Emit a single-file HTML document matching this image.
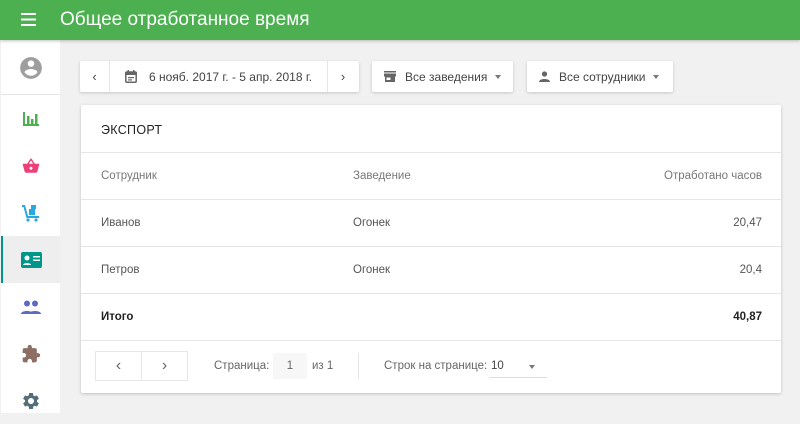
<!DOCTYPE html>
<html><head><meta charset="utf-8"><style>
*{box-sizing:border-box;margin:0;padding:0}
body{width:800px;height:413px;overflow:hidden;background:#f1f1f1;font-family:"Liberation Sans","Noto Sans CJK SC",sans-serif;position:relative;color:#333}
.hdr{position:absolute;left:0;top:0;width:800px;height:40px;background:#4caf50;box-shadow:0 1px 3px rgba(0,0,0,.25);z-index:2}
.hdr .t{position:absolute;left:60px;top:9px;color:#fff;font-size:19px}
.side{position:absolute;left:1px;top:40px;width:59px;height:373px;background:#fff}
.it{position:absolute;left:0;width:59px;height:47px;display:flex;align-items:center;justify-content:center}
.btn{position:absolute;top:61px;height:31px;background:#fff;box-shadow:0 1px 3px rgba(0,0,0,.18);border-radius:2px;font-size:12px;color:#444;display:flex;align-items:center;white-space:nowrap}
.card{position:absolute;left:81px;top:105px;width:700px;height:288px;background:#fff;box-shadow:0 1px 3px rgba(0,0,0,.2);border-radius:2px}
.row{position:absolute;left:0;width:700px;height:47px;border-top:1px solid #e6e6e6;font-size:11.5px;color:#555}
.row span{position:absolute;top:17px}
.c1{left:20px}.c2{left:272px}.c3{right:19px}
</style></head><body>
<div class="hdr">
<svg style="position:absolute;left:21px;top:13px" width="15" height="13"><rect y="0" width="15" height="2" fill="#fff"/><rect y="5.5" width="15" height="2" fill="#fff"/><rect y="11" width="15" height="2" fill="#fff"/></svg>
<div class="t">Общее отработанное время</div></div>
<div class="side">
<div class="it" style="top:4px"><svg width="26" height="26" viewBox="0 0 24 24"><path fill="#9e9e9e" d="M12 2C6.48 2 2 6.48 2 12s4.48 10 10 10 10-4.48 10-10S17.52 2 12 2zm0 3c1.66 0 3 1.34 3 3s-1.34 3-3 3-3-1.34-3-3 1.34-3 3-3zm0 14.2c-2.5 0-4.71-1.28-6-3.220.03-1.99 4-3.08 6-3.08 1.99 0 5.970 1.09 6 3.08-1.29 1.94-3.5 3.22-6 3.22z"/></svg></div>
<div style="position:absolute;left:0;top:54px;width:59px;height:1px;background:#e6e6e6"></div>
<div class="it" style="top:55px"><svg width="18" height="18" viewBox="0 0 18 18" fill="#4caf50"><rect x="1" y="2" width="2" height="14"/><rect x="1" y="14" width="16" height="2"/><rect x="5" y="6" width="2.5" height="9"/><rect x="9" y="9" width="2.5" height="6"/><rect x="13" y="4" width="2.5" height="11"/></svg></div>
<div class="it" style="top:102px"><svg width="20" height="18" viewBox="0 0 24 24"><path fill="#ec407a" d="M17.21 9l-4.38-6.56a1 1 0 0 0-1.66 0L6.79 9H2c-.55 0-1 .45-1 1l.04.27 2.54 9.27c.23.84 1 1.46 1.920 1.46h13c.92 0 1.69-.62 1.93-1.46l2.54-9.27L23 10c0-.55-.45-1-1-1h-4.79zM9 9l3-4.4L15 9H9zm3 8c-1.1 0-2-.9-2-2s.9-2 2-2 2 .9 2 2-.9 2-2 2z"/></svg></div>
<div class="it" style="top:149px"><svg width="20" height="20" viewBox="0 0 20 20" fill="#29a8e0"><path d="M1 2h3l3 11h11v2H5.5L2.5 4H1z"/><rect x="8" y="6" width="6" height="6"/><rect x="10" y="2" width="5" height="4"/><circle cx="7" cy="17" r="1.6"/><circle cx="15" cy="17" r="1.6"/></svg></div>
<div class="it" style="top:196px;background:#eeeeee;border-left:2px solid #009688"><svg width="21" height="16" viewBox="0 0 21 16"><rect width="21" height="16" rx="2" fill="#009688"/><circle cx="6" cy="6" r="2.5" fill="#fff"/><path d="M2 13c0-2.5 8-2.5 8 0z" fill="#fff"/><rect x="12" y="4" width="7" height="1.5" fill="#fff"/><rect x="12" y="7.5" width="7" height="1.5" fill="#fff"/></svg></div>
<div class="it" style="top:243px"><svg width="20" height="14" viewBox="0 0 20 14" fill="#5c6bc0"><circle cx="6" cy="3.5" r="3"/><circle cx="14" cy="3.5" r="3"/><path d="M0 14c0-4 12-4 12 0z"/><path d="M8 14c0-4 12-4 12 0z"/></svg></div>
<div class="it" style="top:290px"><svg width="20" height="20" viewBox="0 0 24 24"><path fill="#8d6e63" d="M20.5 11H19V7c0-1.1-.9-2-2-2h-4V3.5a2.5 2.5 0 0 0-5 0V5H4c-1.1 0-2 .9-2 2v3.8h1.5c1.49 0 2.7 1.21 2.7 2.7s-1.21 2.7-2.7 2.7H2V20c0 1.1.9 2 2 2h3.8v-1.5c0-1.49 1.21-2.7 2.7-2.7 1.49 0 2.7 1.21 2.7 2.7V22H17c1.1 0 2-.9 2-2v-4h1.5a2.5 2.5 0 0 0 0-5z"/></svg></div>
<div class="it" style="top:337px"><svg width="20" height="20" viewBox="0 0 24 24"><path fill="#546e7a" d="M19.14 12.94c.04-.3.06-.61.06-.94 0-.32-.02-.64-.07-.94l2.030-1.58a.49.49 0 0 0 .12-.61l-1.92-3.32a.49.49 0 0 0-.59-.22l-2.39.96c-.5-.38-1.03-.7-1.62-.94l-.36-2.54a.48.48 0 0 0-.48-.41h-3.84c-.24 0-.43.17-.47.41l-.36 2.54c-.59.24-1.130.57-1.62.94l-2.39-.96a.49.49 0 0 0-.59.22L2.74 8.87c-.12.21-.08.47.12.61l2.03 1.58c-.05.3-.09.63-.09.94s.02.64.07.94l-2.03 1.58a.49.49 0 0 0-.12.61l1.92 3.32c.12.22.37.29.59.22l2.39-.96c.5.38 1.03.7 1.62.94l.36 2.54c.05.24.24.41.48.41h3.84c.24 0 .44-.17.47-.41l.36-2.54c.59-.24 1.13-.56 1.62-.94l2.39.96c.22.08.47 0 .59-.22l1.92-3.32c.12-.22.07-.47-.12-.61l-2.01-1.58zM12 15.6c-1.98 0-3.6-1.62-3.6-3.6s1.62-3.6 3.6-3.6 3.6 1.62 3.6 3.6-1.62 3.6-3.6 3.6z"/></svg></div>
</div>

<div class="btn" style="left:80px;width:279px">
<div style="width:30px;height:31px;border-right:1px solid #e6e6e6;text-align:center;line-height:31px;font-size:13px">‹</div>
<div style="width:218px;height:31px;border-right:1px solid #e6e6e6;display:flex;align-items:center;padding-left:15px">
<svg width="12" height="13" viewBox="0 0 12 13" style="margin-right:12px"><rect x=".8" y="2" width="10.4" height="10.2" rx="1" fill="none" stroke="#666" stroke-width="1.5"/><rect x="0" y="2" width="12" height="3" fill="#666"/><rect x="2.5" y="0" width="1.5" height="3" fill="#666"/><rect x="8" y="0" width="1.5" height="3" fill="#666"/><rect x="3" y="7" width="6" height="1.2" fill="#666"/><rect x="3" y="9.3" width="4" height="1.2" fill="#666"/></svg>6 нояб. 2017 г. - 5 апр. 2018 г.</div>
<div style="width:30px;text-align:center;font-size:13px">›</div></div>

<div class="btn" style="left:372px;width:141px;padding-left:12px">
<svg width="12" height="11" viewBox="0 0 12 11" style="margin-right:9px"><rect x="0" y="0" width="12" height="1.5" fill="#666"/><rect x="0" y="2.5" width="12" height="3" fill="#666"/><rect x="1" y="5.5" width="10" height="5.5" fill="#666"/><rect x="2.5" y="6.5" width="4" height="2.5" fill="#fff"/></svg>Все заведения<span style="margin-left:8px;border:3.5px solid transparent;border-top:4px solid #777;margin-top:4px"></span></div>

<div class="btn" style="left:527px;width:146px;padding-left:12px">
<svg width="11" height="11" viewBox="0 0 11 11" style="margin-right:9px"><circle cx="5.5" cy="3" r="2.6" fill="#666"/><path d="M0 11c0-4 11-4 11 0z" fill="#666"/></svg>Все сотрудники<span style="margin-left:8px;border:3.5px solid transparent;border-top:4px solid #777;margin-top:4px"></span></div>

<div class="card">
<div style="position:absolute;left:20px;top:18px;font-size:12.5px;color:#222;letter-spacing:.3px">ЭКСПОРТ</div>
<div class="row" style="top:47px;color:#777"><span class="c1">Сотрудник</span><span class="c2">Заведение</span><span class="c3">Отработано часов</span></div>
<div class="row" style="top:94px"><span class="c1">Иванов</span><span class="c2">Огонек</span><span class="c3">20,47</span></div>
<div class="row" style="top:141px"><span class="c1">Петров</span><span class="c2">Огонек</span><span class="c3">20,4</span></div>
<div class="row" style="top:188px;font-weight:bold;color:#222"><span class="c1">Итого</span><span class="c3">40,87</span></div>
<div class="row" style="top:235px;height:53px;font-size:11.5px;color:#666">
<div style="position:absolute;left:14px;top:10px;width:93px;height:30px;border:1px solid #e6e6e6;display:flex"><div style="width:46px;border-right:1px solid #e6e6e6;text-align:center;line-height:28px;font-size:16px">‹</div><div style="flex:1;text-align:center;line-height:28px;font-size:16px">›</div></div>
<span style="left:133px;top:19px">Страница:</span>
<div style="position:absolute;left:192px;top:12px;width:34px;height:26px;background:#f7f7f7;border-radius:2px;text-align:center;line-height:26px">1</div>
<span style="left:231px;top:19px">из 1</span>
<div style="position:absolute;left:277px;top:12px;width:1px;height:26px;background:#e6e6e6"></div>
<span style="left:303px;top:19px">Строк на странице:</span>
<span style="left:410px;top:19px;color:#444">10</span>
<div style="position:absolute;left:408px;top:36px;width:58px;height:1px;background:#ddd"></div>
<span style="left:448px;top:24px;border:3.5px solid transparent;border-top:4px solid #777"></span>
</div>
</div>
</body></html>
